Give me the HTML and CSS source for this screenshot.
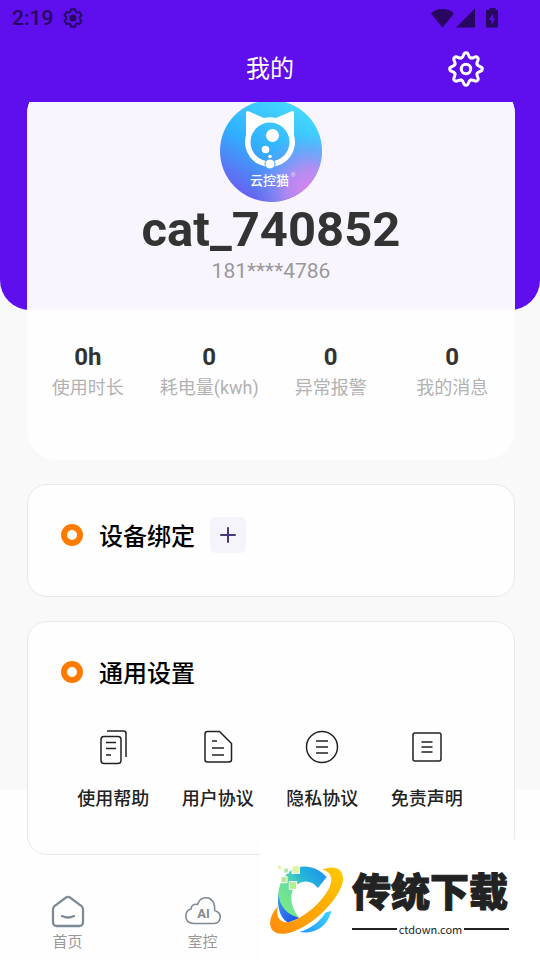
FILE: index.html
```html
<!DOCTYPE html>
<html lang="zh-CN">
<head>
<meta charset="utf-8">
<meta name="viewport" content="width=device-width, initial-scale=1">
<title>我的</title>
<link rel="stylesheet" href="styles.css">
</head>
<body>
<header class="header">
  <div class="status">
    <span>2:19</span>
    <svg class="status-gear" viewBox="-10 -10 20 20" aria-hidden="true">
      <path d="M-2.8-6L-2-8.7H2L2.8-6L3.8-5.4L6.5-6.1L8.5-2.6L6.6-.6V.6L8.5 2.6L6.5 6.1L3.8 5.4L2.8 6L2 8.7H-2L-2.8 6L-3.8 5.4L-6.5 6.1L-8.5 2.6L-6.6.6V-.6L-8.5-2.6L-6.5-6.1L-3.8-5.4Z" fill="none" stroke="currentColor" stroke-width="2" stroke-linejoin="round"/>
      <circle r="3.5" fill="currentColor"/>
    </svg>
    <svg class="status-signals" viewBox="0 0 68 20" aria-hidden="true" fill="currentColor">
      <path d="M0 5.5C6-.4 17-.4 23 5.5L11.500 19.500Z"/>
      <path d="M44 .5V19.500H25Z"/>
      <path fill-rule="evenodd" d="M58.500 0H64.500V2H66Q67 2 67 3V18.500Q67 19.500 66 19.500H56Q55 19.500 55 18.500V3Q55 2 56 2H58.500ZM62 5.500L58 12H60.500V17L64 10.500H62Z"/>
    </svg>
  </div>
  <div class="titlebar">
    <h1 class="title">我的</h1>
    <button class="settings" type="button" aria-label="设置">
      <svg viewBox="-18 -18 36 36" fill="none" stroke="currentColor" stroke-width="3">
        <defs><path id="tooth" d="M-4.600-11.100C-1.600-12.300-3.400-16.300 0-16.300C3.400-16.300 1.600-12.300 4.600-11.100" stroke-linecap="round"/></defs>
        <use href="#tooth"/><use href="#tooth" transform="rotate(45)"/><use href="#tooth" transform="rotate(90)"/><use href="#tooth" transform="rotate(135)"/><use href="#tooth" transform="rotate(180)"/><use href="#tooth" transform="rotate(225)"/><use href="#tooth" transform="rotate(270)"/><use href="#tooth" transform="rotate(315)"/>
        <circle r="4.700"/>
      </svg>
    </button>
  </div>
</header>

<main class="main">
  <section class="profile">
    <div class="identity">
      <svg class="avatar" viewBox="0 0 102 102" role="img" aria-label="云控猫">
        <defs>
          <linearGradient id="sky" x1=".75" y1=".1" x2=".25" y2=".95"><stop offset="0" stop-color="#45d6ff"/><stop offset=".5" stop-color="#30b0ff"/><stop offset="1" stop-color="#6960f0"/></linearGradient>
          <radialGradient id="pink" cx=".88" cy=".88" r=".55"><stop offset="0" stop-color="#dd83ec"/><stop offset=".4" stop-color="#c488f0" stop-opacity=".85"/><stop offset="1" stop-color="#8a8cf5" stop-opacity="0"/></radialGradient>
        </defs>
        <circle cx="51" cy="51" r="51" fill="url(#sky)"/>
        <circle cx="51" cy="51" r="51" fill="url(#pink)"/>
        <path fill="#fff" fill-rule="evenodd" d="M26 13Q26 10 29 11.500L44 18Q50 16.500 56 18L71 11.500Q74 10 74 13V35A25 25 0 1 1 26 35ZM50 22.500A19.500 19.500 0 1 0 50 61.500A19.500 19.500 0 1 0 50 22.500Z"/>
        <circle cx="52.500" cy="35.500" r="6.500" fill="#fff"/><circle cx="45.500" cy="49.500" r="3.800" fill="#fff"/><circle cx="50" cy="56.500" r="1.800" fill="#fff"/>
        <circle cx="50" cy="64" r="5" fill="#fff" stroke="#40a4fa"/>
        <text x="49.500" y="85" text-anchor="middle" class="avatar-name">云控猫</text>
        <text x="73" y="77" text-anchor="middle" class="avatar-mark">®</text>
      </svg>
      <h2 class="name">cat_740852</h2>
      <p class="phone">181****4786</p>
    </div>
    <dl class="stats">
      <div><dd>0h</dd><dt>使用时长</dt></div>
      <div><dd>0</dd><dt>耗电量(kwh)</dt></div>
      <div><dd>0</dd><dt>异常报警</dt></div>
      <div><dd>0</dd><dt>我的消息</dt></div>
    </dl>
  </section>

  <section class="card">
    <div class="card-head">
      <span class="ring"></span>
      <h2>设备绑定</h2>
      <button class="add" type="button" aria-label="添加设备"><svg viewBox="0 0 16 16"><path d="M8 1V15M1 8H15" fill="none" stroke="#453a77" stroke-width="2" stroke-linecap="round"/></svg></button>
    </div>
  </section>

  <section class="card">
    <div class="card-head">
      <span class="ring"></span>
      <h2>通用设置</h2>
    </div>
    <nav class="links">
      <a href="#help"><svg viewBox="0 0 36 36"><rect x="6" y="7.500" width="20" height="27" rx="3"/><path d="M12 2H28.500Q31 2 31 4.500V28M11 13.500H21M11 19.500H21M11 26H16"/></svg>使用帮助</a>
      <a href="#user"><svg viewBox="0 0 36 36"><path d="M7.500 2.500H19.500L31.500 14.500V30.500Q31.500 33 29 33H7.500Q5 33 5 30.500V5Q5 2.500 7.500 2.500ZM12 12H17M12 19H24M12 26H24"/></svg>用户协议</a>
      <a href="#privacy"><svg viewBox="0 0 36 36"><circle cx="18" cy="18" r="15.500"/><path d="M12 12H24M12 18H24M12 24H24"/></svg>隐私协议</a>
      <a href="#disclaimer"><svg viewBox="0 0 36 36"><rect x="4" y="4" width="28" height="28" rx="2"/><path d="M12.500 13H23.500M12.500 18H23.500M12.500 23H23.500"/></svg>免责声明</a>
    </nav>
  </section>
</main>

<nav class="tabs">
  <a href="#home"><svg viewBox="0 0 36 36"><path d="M16 4.500Q18 3.200 20 4.500L31.500 13Q33 14.500 33 16.500V29Q33 33 29 33H7Q3 33 3 29V16.500Q3 14.500 4.500 13Z" stroke-width="2.300"/><path d="M12 23Q18 26 24 23" stroke-width="2.300"/></svg>首页</a>
  <a href="#room"><svg viewBox="0 0 36 36"><path d="M9 30.500C3 30.500 .8 27 .8 23.500C.8 19 3.500 16.500 6 16C6 12.500 9 10.500 12.500 11.500C14 7 17.500 4.800 21 4.800C26.500 4.800 30 9 29.700 17.500C33 18.500 35.200 20.500 35.200 24C35.200 28 32.500 30.500 29 30.500Z" stroke-width="1.600"/><text x="18.500" y="25" text-anchor="middle">AI</text></svg>室控</a>
</nav>

<aside class="watermark">
  <svg viewBox="0 0 270 270" aria-hidden="true">
    <defs>
      <linearGradient id="arc" gradientUnits="userSpaceOnUse" x1="60" y1="150" x2="180" y2="60"><stop offset="0" stop-color="#79e985"/><stop offset=".3" stop-color="#6adf9f"/><stop offset=".65" stop-color="#25b8d8"/><stop offset="1" stop-color="#209ae8"/></linearGradient>
      <linearGradient id="orbit" x1="0" y1="1" x2="1" y2="0"><stop offset="0" stop-color="#ff8a0c"/><stop offset="1" stop-color="#ffc900"/></linearGradient>
      <linearGradient id="base" x1="0" y1="1" x2="1" y2="0"><stop offset="0" stop-color="#2597ff"/><stop offset="1" stop-color="#3bd8fa"/></linearGradient>
      <linearGradient id="deep" x1="0" y1="0" x2="1" y2="1"><stop offset="0" stop-color="#3c9cf5"/><stop offset="1" stop-color="#1849e6"/></linearGradient>
    </defs>
    <path fill="url(#arc)" d="M194 66L168 99C150 76 125 74 106 88C84 106 78 145 112 190L78 200C45 170 42 120 56 85C78 30 146 14 194 66Z"/>
    <path fill="url(#deep)" d="M49 118C54 158 78 180 112 189L78 203C52 190 45 150 49 118Z"/>
    <path fill="url(#base)" d="M208 167C200 206 165 240 112 231C150 219 178 195 190 173Z"/>
    <path fill="url(#orbit)" d="M181 44C216 29 245 41 243 74C238 132 140 225 70 236C30 241 16 214 29 182C34 170 41 160 48 155C42 176 46 199 72 202C112 204 205 126 208 76C208 58 199 48 181 44Z"/>
    <g stroke="#fff" stroke-width="3">
      <rect x="46" y="31" width="13" height="13" fill="#e3f3a8"/><rect x="65" y="39" width="15" height="15" fill="#b5e8a5"/><rect x="90" y="32" width="22" height="23" fill="#e3f3a0"/><rect x="57" y="65" width="18" height="18" fill="#b5e88f"/><rect x="82" y="80" width="22" height="23" fill="#b5ed8c"/>
    </g>
  </svg>
  <div class="brand">
    <strong>传统下载</strong>
    <span>ctdown.com</span>
  </div>
</aside>
</body>
</html>
```
FILE: styles.css
```css
* { box-sizing: border-box; }

body {
  position: relative;
  display: flex;
  flex-direction: column;
  min-height: 100vh;
  margin: 0;
  background: #fefefe;
  color: #333;
  font-family: Roboto, "Noto Sans CJK SC", sans-serif;
}

h1, h2, p, dl, dd { margin: 0; }
a { color: inherit; text-decoration: none; }
button { padding: 0; border: 0; background: none; color: inherit; }
svg { display: block; flex: none; }

.header {
  position: relative;
  z-index: 2;
  background: #5f0eed;
  color: #fff;
}

.status {
  display: flex;
  align-items: center;
  gap: 10px;
  height: 36px;
  padding: 0 41px 0 12px;
  color: #27075f;
  font-size: 21px;
  font-weight: 500;
}
.status-gear { width: 20px; height: 20px; }
.status-signals { width: 68px; height: 20px; margin-left: auto; }

.titlebar {
  display: grid;
  grid-template-columns: 1fr auto 1fr;
  align-items: center;
  height: 66px;
  padding: 0 56px;
}
.title { grid-column: 2; font-size: 24px; font-weight: 400; line-height: 36px; }
.settings { justify-self: end; width: 36px; height: 36px; }

.main {
  position: relative;
  padding: 0 25px 0 27px;
  background: linear-gradient(#f9f9f9, #f9f9f9) no-repeat 0 0 / 100% 688px;
}
.main::before {
  content: "";
  position: absolute;
  inset: 0 0 auto;
  height: 208px;
  border-radius: 0 0 30px 30px;
  background: #5f0eed;
}

.profile {
  position: relative;
  overflow: hidden;
  margin-top: -18px;
  padding-bottom: 59px;
  border-radius: 30px;
  background: #fefefe;
  text-align: center;
}
.identity { padding: 16px 0 26px; background: #f8f5ff; }
.avatar { width: 102px; height: 102px; margin: 0 auto; }
.avatar-name { fill: #fff; font-size: 13px; font-weight: 500; }
.avatar-mark { fill: #e8dcff; font-size: 6px; }
.name { font-size: 49px; line-height: 56px; font-weight: 700; }
.phone { color: #999; font-size: 21px; line-height: 26px; }

.stats {
  display: grid;
  grid-template-columns: repeat(4, 1fr);
  padding: 33px 2px 0 0;
}
.stats div { display: flex; flex-direction: column; gap: 4px; }
.stats dd { font-size: 24px; line-height: 28px; font-weight: 700; }
.stats dt { color: #b2b2b2; font-size: 18px; line-height: 26px; white-space: nowrap; }

.card {
  position: relative;
  margin-top: 24px;
  padding: 32px 35px 43px 33px;
  border: 1px solid #e9e9e9;
  border-radius: 20px;
  background: #fefefe;
}
.card-head { display: flex; align-items: center; height: 36px; }
.card-head h2 { margin: 0 15px 0 16px; padding-top: 3px; color: #000; font-size: 24px; line-height: 36px; font-weight: 500; }
.ring { width: 22px; height: 22px; border: 6px solid #ff7b00; border-radius: 50%; }
.add {
  display: grid;
  place-items: center;
  width: 36px;
  height: 36px;
  border-radius: 5px;
  background: #f5f4fa;
}
.add svg { width: 16px; height: 16px; }

.links {
  display: grid;
  grid-template-columns: repeat(4, 1fr);
  margin-top: 39px;
  color: #222;
  font-size: 18px;
  line-height: 24px;
  font-weight: 500;
}
.links a { display: flex; flex-direction: column; align-items: center; gap: 22px; }
.links svg { width: 36px; height: 36px; fill: none; stroke: #222; stroke-width: 1.5; }

.tabs {
  display: grid;
  grid-template-columns: repeat(4, 1fr);
  padding: 38px 0 8px;
  color: #999;
  font-size: 15px;
  line-height: 20px;
}
.tabs a { display: flex; flex-direction: column; align-items: center; gap: 3px; }
.tabs svg { width: 36px; height: 36px; fill: none; stroke: #7e8b96; stroke-linecap: round; }
.tabs text { fill: #7e8b96; stroke: none; font-size: 13px; font-weight: 700; }

.watermark {
  position: absolute;
  right: 0;
  bottom: 0;
  display: flex;
  align-items: center;
  width: 280px;
  height: 120px;
  padding-left: 2px;
  background: #fff;
}
.watermark svg { width: 90px; height: 90px; }
.brand { display: flex; flex-direction: column; gap: 6px; width: 157px; color: #222; font-family: "Noto Sans CJK SC", sans-serif; }
.brand strong { font-size: 39px; line-height: 52px; font-weight: 900; -webkit-text-stroke: 1px #222; white-space: nowrap; }
.brand span { display: flex; align-items: center; gap: 2px; font-size: 11px; line-height: 16px; font-weight: 400; }
.brand span::before, .brand span::after { content: ""; flex: 1; height: 2px; background: #222; }
```
